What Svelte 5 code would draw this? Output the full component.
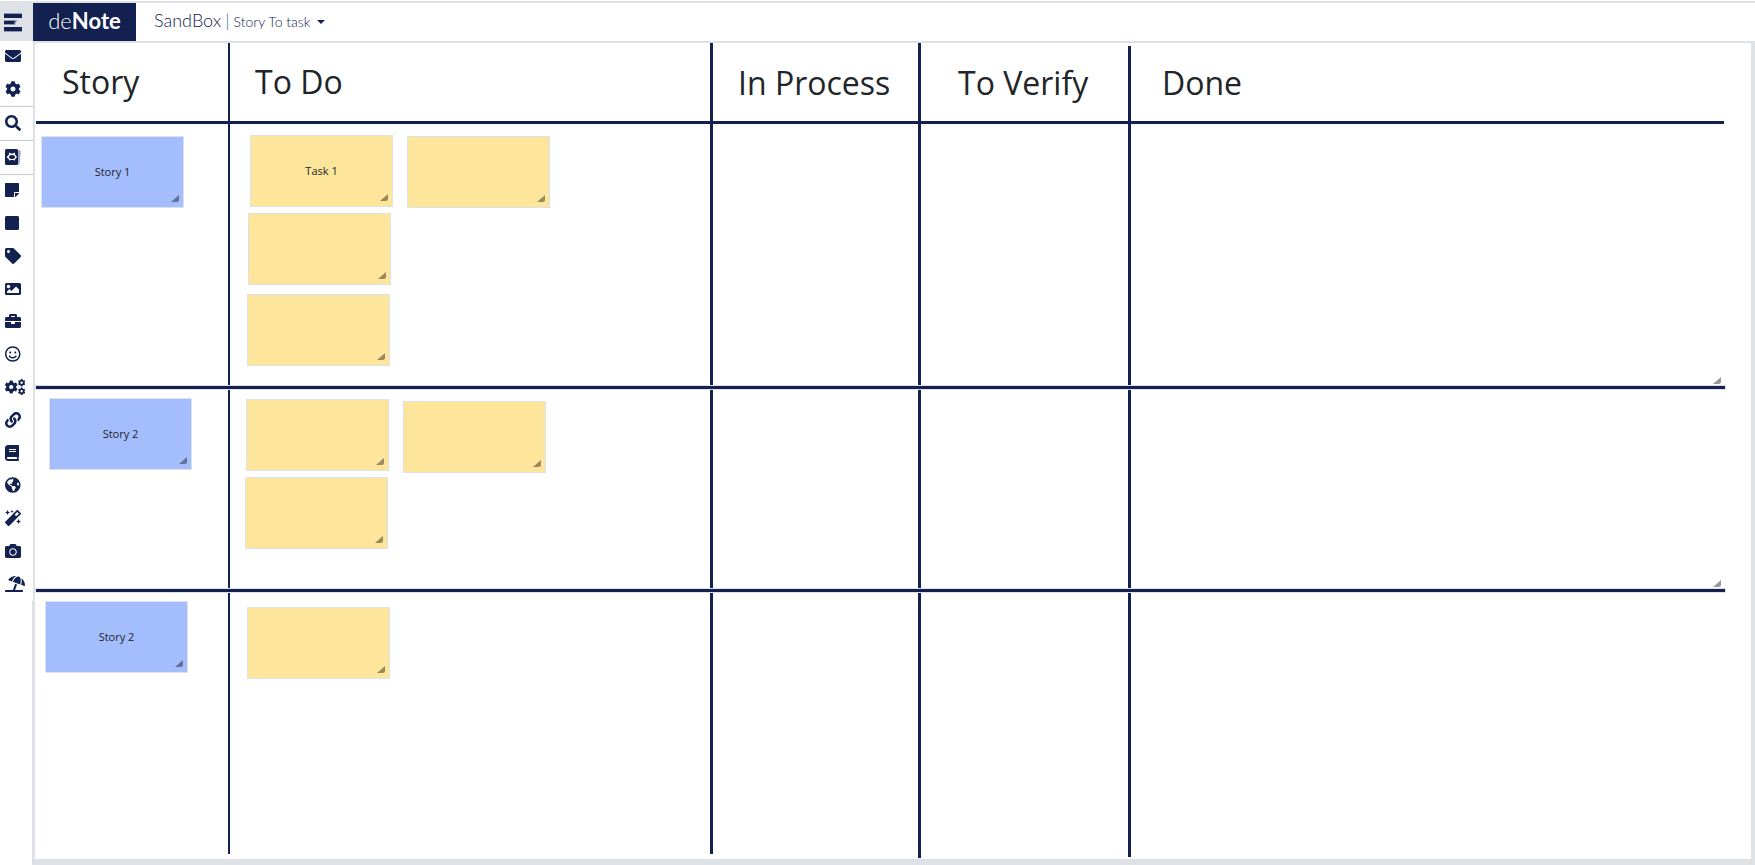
<script>
  const cog =
    "M487.4 315.7l-42.6-24.6c4.3-23.2 4.3-47 0-70.2l42.6-24.6c4.9-2.8 7.1-8.6 5.5-14-11.1-35.6-30-67.8-54.7-94.6-3.8-4.1-10-5.1-14.8-2.3L380.8 110c-17.9-15.4-38.5-27.3-60.8-35.1V25.8c0-5.6-3.9-10.5-9.4-11.7-36.7-8.2-74.3-7.8-109.2 0-5.5 1.2-9.4 6.1-9.4 11.7V75c-22.2 7.9-42.8 19.8-60.8 35.1L88.7 85.5c-4.9-2.8-11-1.9-14.8 2.3-24.7 26.7-43.6 58.9-54.7 94.6-1.7 5.4.6 11.2 5.5 14L67.3 221c-4.3 23.2-4.3 47 0 70.2l-42.6 24.6c-4.9 2.8-7.1 8.6-5.5 14 11.1 35.6 30 67.8 54.7 94.6 3.8 4.1 10 5.1 14.8 2.3l42.6-24.6c17.9 15.4 38.5 27.3 60.8 35.1v49.2c0 5.6 3.9 10.5 9.4 11.7 36.7 8.2 74.3 7.8 109.2 0 5.5-1.2 9.4-6.1 9.4-11.7v-49.2c22.2-7.9 42.8-19.8 60.8-35.1l42.6 24.6c4.9 2.8 11 1.9 14.8-2.3 24.7-26.7 43.6-58.9 54.7-94.6 1.5-5.5-.7-11.3-5.6-14.1zM256 336c-44.1 0-80-35.9-80-80s35.9-80 80-80 80 35.9 80 80-35.9 80-80 80z";

  const settings = [
    { name: "Messages", w: 512, d: "M502.3 190.8c3.9-3.1 9.7-.2 9.7 4.7V400c0 26.5-21.5 48-48 48H48c-26.5 0-48-21.5-48-48V195.6c0-5 5.7-7.8 9.7-4.7 22.4 17.4 52.1 39.5 154.1 113.6 21.1 15.4 56.7 47.8 92.2 47.6 35.7.3 72-32.8 92.3-47.6 102-74.1 131.6-96.3 154-113.7zM256 320c23.2.4 56.6-29.2 73.4-41.4 132.7-96.3 142.8-104.7 173.4-128.7 5.8-4.5 9.2-11.5 9.2-18.9v-19c0-26.5-21.5-48-48-48H48c-26.5 0-48 21.5-48 48v19c0 7.4 3.4 14.3 9.2 18.9 30.6 23.9 40.7 32.4 173.4 128.7 16.8 12.2 50.2 41.8 73.4 41.4z" },
    { name: "Settings", w: 512, d: cog },
  ];

  const search = [
    { name: "Search", w: 512, d: "M505 442.7L405.3 343c-4.5-4.5-10.6-7-17-7H372c27.6-35.3 44-79.7 44-128C416 93.1 322.9 0 208 0S0 93.1 0 208s93.1 208 208 208c48.3 0 92.7-16.4 128-44v16.3c0 6.4 2.5 12.5 7 17l99.7 99.7c9.4 9.4 24.6 9.4 33.9 0l28.3-28.3c9.4-9.4 9.4-24.6.1-34zM208 336c-70.7 0-128-57.2-128-128 0-70.7 57.2-128 128-128 70.7 0 128 57.2 128 128 0 70.7-57.2 128-128 128z" },
  ];

  const cards = [{ name: "Cards", kind: "cards" }];

  const tools = [
    { name: "Note", w: 448, d: "M312 320h136V56c0-13.3-10.7-24-24-24H24C10.7 32 0 42.7 0 56v400c0 13.3 10.7 24 24 24h264V344c0-13.2 10.8-24 24-24zm129 55l-98 98c-4.5 4.5-10.6 7-17 7h-6V352h128v6.1c0 6.3-2.5 12.4-7 16.9z" },
    { name: "Shape", w: 448, d: "M400 32H48C21.5 32 0 53.5 0 80v352c0 26.5 21.5 48 48 48h352c26.5 0 48-21.5 48-48V80c0-26.5-21.5-48-48-48z" },
    { name: "Tag", w: 512, d: "M0 252.118V48C0 21.49 21.49 0 48 0h204.118a48 48 0 0 1 33.941 14.059l211.882 211.882c18.745 18.745 18.745 49.137 0 67.882L293.823 497.941c-18.745 18.745-49.137 18.745-67.882 0L14.059 286.059A48 48 0 0 1 0 252.118zM112 64c-26.51 0-48 21.49-48 48s21.49 48 48 48 48-21.49 48-48-21.49-48-48-48z" },
    { name: "Image", w: 512, d: "M464 448H48c-26.51 0-48-21.49-48-48V112c0-26.51 21.49-48 48-48h416c26.51 0 48 21.49 48 48v288c0 26.51-21.49 48-48 48zM112 120c-30.928 0-56 25.072-56 56s25.072 56 56 56 56-25.072 56-56-25.072-56-56-56zM64 384h384V272l-87.515-87.515c-4.686-4.686-12.284-4.686-16.971 0L208 320l-55.515-55.515c-4.686-4.686-12.284-4.686-16.971 0L64 336v48z" },
    { name: "Briefcase", w: 512, d: "M320 336c0 8.84-7.16 16-16 16h-96c-8.84 0-16-7.16-16-16v-48H0v144c0 25.6 22.4 48 48 48h416c25.6 0 48-22.4 48-48V288H320v48zm144-208h-80V80c0-25.6-22.4-48-48-48H176c-25.6 0-48 22.4-48 48v48H48c-25.6 0-48 22.4-48 48v80h512v-80c0-25.6-22.4-48-48-48zm-144 0H192V96h128v32z" },
    { name: "Emoji", w: 496, d: "M248 8C111 8 0 119 0 256s111 248 248 248 248-111 248-248S385 8 248 8zm0 448c-110.3 0-200-89.7-200-200S137.7 56 248 56s200 89.7 200 200-89.7 200-200 200zm-80-216c17.7 0 32-14.3 32-32s-14.3-32-32-32-32 14.3-32 32 14.3 32 32 32zm160 0c17.7 0 32-14.3 32-32s-14.3-32-32-32-32 14.3-32 32 14.3 32 32 32zm4 72.6c-20.8 25-51.5 39.4-84 39.4s-63.2-14.3-84-39.4c-8.5-10.2-23.7-11.5-33.8-3.1-10.2 8.5-11.5 23.6-3.1 33.8 30 36 74.1 56.6 120.9 56.6s90.9-20.6 120.9-56.6c8.5-10.2 7.1-25.3-3.1-33.8-10.1-8.4-25.3-7.1-33.8 3.1z" },
    { name: "Automation", kind: "cogs" },
    { name: "Link", w: 512, d: "M326.612 185.391c59.747 59.809 58.927 155.698.36 214.59-.11.12-.24.25-.36.37l-67.2 67.2c-59.27 59.27-155.699 59.262-214.96 0-59.27-59.26-59.27-155.7 0-214.96l37.106-37.106c9.84-9.84 26.786-3.3 27.294 10.606.648 17.722 3.826 35.527 9.69 52.721 1.986 5.822.567 12.262-3.783 16.612l-13.087 13.087c-28.026 28.026-28.905 73.66-1.155 101.96 28.024 28.579 74.086 28.749 102.325.51l67.2-67.19c28.191-28.191 28.073-73.757 0-101.83-3.701-3.694-7.429-6.564-10.341-8.569a16.037 16.037 0 0 1-6.947-12.606c-.396-10.567 3.348-21.456 11.698-29.806l21.054-21.055c5.521-5.521 14.182-6.199 20.584-1.731a152.482 152.482 0 0 1 20.522 17.197zM467.547 44.449c-59.261-59.262-155.69-59.27-214.96 0l-67.2 67.2c-.12.12-.25.25-.36.37-58.566 58.892-59.387 154.781.36 214.59a152.454 152.454 0 0 0 20.521 17.196c6.402 4.468 15.064 3.789 20.584-1.731l21.054-21.055c8.35-8.35 12.094-19.239 11.698-29.806a16.037 16.037 0 0 0-6.947-12.606c-2.912-2.005-6.64-4.875-10.341-8.569-28.073-28.073-28.191-73.639 0-101.83l67.2-67.19c28.239-28.239 74.3-28.069 102.325.51 27.75 28.3 26.872 73.934-1.155 101.96l-13.087 13.087c-4.35 4.35-5.769 10.79-3.783 16.612 5.864 17.194 9.042 34.999 9.69 52.721.509 13.906 17.454 20.446 27.294 10.606l37.106-37.106c59.271-59.259 59.271-155.699.001-214.959z" },
    { name: "Book", w: 448, d: "M448 360V24c0-13.3-10.7-24-24-24H96C43 0 0 43 0 96v320c0 53 43 96 96 96h328c13.3 0 24-10.7 24-24v-16c0-7.5-3.5-14.3-8.9-18.7-4.2-15.4-4.2-59.3 0-74.7 5.4-4.3 8.9-11.1 8.9-18.6zM128 134c0-3.3 2.7-6 6-6h212c3.3 0 6 2.7 6 6v20c0 3.3-2.7 6-6 6H134c-3.3 0-6-2.7-6-6v-20zm0 64c0-3.3 2.7-6 6-6h212c3.3 0 6 2.7 6 6v20c0 3.3-2.7 6-6 6H134c-3.3 0-6-2.7-6-6v-20zm253.4 250H96c-17.7 0-32-14.3-32-32 0-17.6 14.4-32 32-32h285.4c-1.9 17.1-1.9 46.9 0 64z" },
    { name: "Web", w: 496, d: "M248 8C111.03 8 0 119.03 0 256s111.03 248 248 248 248-111.03 248-248S384.97 8 248 8zm82.29 357.6c-3.9 3.88-7.99 7.95-11.31 11.28-2.99 3-5.1 6.7-6.17 10.71-1.51 5.66-2.73 11.38-4.77 16.87l-17.39 46.85c-13.76 3-28 4.69-42.65 4.69v-27.38c1.69-12.62-7.64-36.26-22.63-51.25-6-6-9.37-14.14-9.37-22.63v-32.01c0-11.64-6.27-22.34-16.46-27.97-14.37-7.95-34.81-19.06-48.81-26.11-11.48-5.78-22.1-13.14-31.65-21.75l-.8-.72a114.792 114.792 0 0 1-18.06-20.74c-9.38-13.77-24.66-36.42-34.59-51.14 20.47-45.5 57.36-82.04 103.2-101.89l24.01 12.01C203.48 89.74 216 82.01 216 70.11v-11.3c7.99-1.29 16.12-2.11 24.39-2.42l28.3 28.3c6.25 6.25 6.25 16.38 0 22.63L264 112l-10.34 10.34c-3.12 3.12-3.12 8.19 0 11.31l4.69 4.69c3.12 3.12 3.12 8.19 0 11.31l-8 8a8.008 8.008 0 0 1-5.66 2.34h-8.99c-2.08 0-4.08.81-5.58 2.27l-9.92 9.65a8.008 8.008 0 0 0-1.58 9.31l15.59 31.19c2.66 5.32-1.21 11.58-7.15 11.58h-5.64c-1.93 0-3.79-.7-5.24-1.96l-9.28-8.06a16.017 16.017 0 0 0-15.55-3.1l-31.17 10.39a11.95 11.95 0 0 0-8.17 11.34c0 4.53 2.56 8.66 6.61 10.69l11.08 5.54c9.41 4.71 19.79 7.16 30.31 7.16s22.59 27.29 32 32h66.75c8.49 0 16.62 3.37 22.63 9.37l13.69 13.69a30.503 30.503 0 0 1 8.93 21.57 46.536 46.536 0 0 1-13.72 32.98zM417 274.25c-5.79-1.45-10.84-5-14.15-9.97l-17.98-26.97a23.97 23.97 0 0 1 0-26.62l19.59-29.38c2.32-3.47 5.5-6.29 9.24-8.15l12.98-6.49C440.2 193.59 448 223.87 448 256c0 8.67-.74 17.16-1.82 25.54L417 274.25z" },
    { name: "Magic", w: 512, d: "M224 96l16-32 32-16-32-16-16-32-16 32-32 16 32 16 16 32zM80 160l26.66-53.33L160 80l-53.34-26.67L80 0 53.34 53.33 0 80l53.34 26.67L80 160zm352 128l-26.66 53.33L352 368l53.34 26.67L432 448l26.66-53.33L512 368l-53.34-26.67L432 288zm70.62-193.77L417.77 9.38C411.53 3.12 403.34 0 395.15 0c-8.19 0-16.38 3.12-22.63 9.38L9.38 372.52c-12.5 12.5-12.5 32.76 0 45.25l84.85 84.85c6.25 6.25 14.44 9.37 22.62 9.37 8.19 0 16.38-3.12 22.63-9.37l363.14-363.15c12.5-12.48 12.5-32.75 0-45.24zM359.45 203.46l-50.91-50.91 86.6-86.6 50.91 50.91-86.6 86.6z" },
    { name: "Camera", w: 512, d: "M512 144v288c0 26.5-21.5 48-48 48H48c-26.5 0-48-21.5-48-48V144c0-26.5 21.5-48 48-48h88l12.3-32.9c7-18.7 24.9-31.1 44.9-31.1h125.5c20 0 37.9 12.4 44.9 31.1L376 96h88c26.5 0 48 21.5 48 48zM376 288c0-66.2-53.8-120-120-120s-120 53.8-120 120 53.8 120 120 120 120-53.8 120-120zm-32 0c0 48.5-39.5 88-88 88s-88-39.5-88-88 39.5-88 88-88 88 39.5 88 88z" },
    { name: "Holiday", w: 640, d: "M115.38 136.9l102.11 37.18c35.19-81.54 86.21-144.29 139-173.7-95.88-4.89-188.78 36.96-248.53 111.8-6.69 8.4-2.66 21.05 7.42 24.72zm132.25 48.16l238.48 86.83c35.76-121.38 18.7-231.66-42.63-253.98-7.4-2.7-15.13-4-23.09-4-58.02.01-128.27 69.17-172.76 171.15zM521.48 60.5c6.22 16.3 10.83 34.6 13.2 55.19 5.74 49.89-1.42 108.23-18.95 166.98l102.62 37.36c10.09 3.67 21.31-3.43 21.57-14.17 2.32-95.69-41.91-187.44-118.44-245.36zM560 447.98H321.06L386 269.5l-60.14-21.9-72.9 200.37H16c-8.84 0-16 7.16-16 16.01v32.01C0 504.83 7.16 512 16 512h544c8.84 0 16-7.17 16-16.01v-32.01c0-8.84-7.16-16-16-16z" },
  ];

  const groups = [settings, search, cards, tools];

  // Everything on the board is a free item: x / y from the board's corner
  const titles = [
    { text: "Story", x: 27, y: 15 },
    { text: "To Do", x: 220, y: 15 },
    { text: "In Process", x: 703, y: 16 },
    { text: "To Verify", x: 923, y: 16 },
    { text: "Done", x: 1127, y: 16 },
  ];

  const columns = [
    { x: 193, top: 0, bottom: 5, size: 2 },
    { x: 675, top: 0, bottom: 5, size: 3 },
    { x: 883, top: 0, bottom: 1, size: 3 },
    { x: 1093, top: 3, bottom: 2, size: 3 },
  ];

  const rows = [
    { y: 77, frame: false },
    { y: 342, frame: true },
    { y: 545, frame: true },
  ];

  let notes = [
    { type: "story", text: "Story 1", x: 6, y: 93 },
    { type: "task", text: "Task 1", x: 215, y: 92 },
    { type: "task", text: "", x: 372, y: 93 },
    { type: "task", text: "", x: 213, y: 170 },
    { type: "task", text: "", x: 212, y: 251 },
    { type: "story", text: "Story 2", x: 14, y: 355 },
    { type: "task", text: "", x: 211, y: 356 },
    { type: "task", text: "", x: 368, y: 358 },
    { type: "task", text: "", x: 210, y: 434 },
    { type: "story", text: "Story 2", x: 10, y: 558 },
    { type: "task", text: "", x: 212, y: 564 },
  ];
</script>

{#snippet grip()}
  <svg class="grip" viewBox="0 0 8 7" aria-hidden="true">
    <path d="M8 0v4.500q0 2.500-2.500 2.500H0z" />
  </svg>
{/snippet}

<div class="app">
  <header>
    <button class="menu" aria-label="Menu">
      <svg width="18" height="19" viewBox="0 0 18 19" aria-hidden="true">
        <path class="shade" d="M0 0h18v5H0zM0 7h13l-2 5H0zM0 14h18v5H0z" />
        <path d="M0 1h18v4H0zM0 8h11l-1 3H0zM0 14h18v4H0z" />
      </svg>
    </button>
    <a class="logo" href="#home">de<b>Note</b></a>
    <button class="crumb">
      <span class="space">SandBox</span>
      <span class="bar">|</span>
      <span>Story To task</span>
      <span class="caret"></span>
    </button>
  </header>

  <main>
    <nav>
      {#each groups as group}
        <div class="group">
          {#each group as item}
            <button class="tool" aria-label={item.name}>
              {#if item.kind === "cards"}
                <svg width="16" height="16" viewBox="0 0 16 16">
                  <path class="back" d="M12 1l3 .500q1 .300.900 1.300L14.500 14.500q-.300 1.200-1.500 1.200H10z" />
                  <rect width="13" height="16" rx="1.500" />
                  <path class="face" d="M1.500 8L4 5.500V3.500l2 1h2l2-1v2L12 8l-2 2.500v1l-2-.500H6l-2 .500v-1z" />
                  <ellipse cx="7" cy="8" rx="3" ry="2" />
                </svg>
              {:else if item.kind === "cogs"}
                <svg width="20" height="16" viewBox="0 0 640 512">
                  <path d={cog} transform="translate(-16 41) scale(.84)" />
                  <path d={cog} transform="translate(410 -4) scale(.48)" />
                  <path d={cog} transform="translate(410 270) scale(.48)" />
                </svg>
              {:else}
                <svg width={item.w / 32} height="16" viewBox="0 0 {item.w} 512">
                  <path d={item.d} />
                </svg>
              {/if}
            </button>
          {/each}
        </div>
      {/each}
    </nav>

    <section class="board">
      {#each columns as col}
        <div
          class="column"
          style="left: {col.x}px; top: {col.top}px; bottom: {col.bottom}px; width: {col.size}px"
        ></div>
      {/each}

      {#each rows as row}
        <div class="row" class:frame={row.frame} style="top: {row.y}px">
          {#if row.frame}
            {@render grip()}
          {/if}
        </div>
      {/each}

      {#each titles as title}
        <h2 style="left: {title.x}px; top: {title.y}px">{title.text}</h2>
      {/each}

      {#each notes as note}
        <div class="note {note.type}" style="left: {note.x}px; top: {note.y}px">
          {note.text}
          {@render grip()}
        </div>
      {/each}
    </section>
  </main>
</div>

<style>
  :global(body) {
    margin: 0;
    background: #fff;
  }
  .app {
    display: flex;
    flex-direction: column;
    box-sizing: border-box;
    min-height: 100vh;
    padding-top: 1px;
    font-family: "Open Sans", "Noto Sans", sans-serif;
    color: #212529;
  }
  button {
    padding: 0;
    border: 0;
    background: none;
    font: inherit;
    color: inherit;
    cursor: pointer;
  }
  svg {
    display: block;
    fill: #12214f;
  }
  header {
    display: flex;
    height: 38px;
    border-top: 2px solid #dee2e6;
    font-family: Lato, sans-serif;
    color: #12214f;
  }
  .menu {
    width: 33px;
    padding-left: 4px;
    background: #dee2e6;
  }
  .shade {
    fill: #8f97b3;
  }
  .logo {
    display: flex;
    justify-content: center;
    width: 103px;
    background: #12214f;
    color: #fff;
    font-size: 22px;
    font-weight: 300;
    line-height: 36px;
    text-decoration: none;
  }
  .logo b {
    font-weight: 700;
  }
  .crumb {
    display: flex;
    align-items: baseline;
    padding-left: 18px;
    font-size: 14px;
    font-weight: 300;
    line-height: 34px;
  }
  .space,
  .bar {
    font-size: 18px;
  }
  .bar {
    margin: 0 4px;
    color: #1c6fae;
  }
  .caret {
    align-self: flex-start;
    margin: 17px 0 0 7px;
    border: 4px solid transparent;
    border-top-color: #12214f;
    border-bottom: 0;
  }
  main {
    display: flex;
    flex: 1;
  }
  nav {
    position: relative;
    z-index: 1;
    display: flex;
    flex-direction: column;
    align-self: flex-start;
    width: 33px;
    height: 560px;
    margin-right: -1px;
    background: #fff;
  }
  .group {
    display: flex;
    flex-direction: column;
    border-bottom: 1px solid #c8c9cc;
  }
  .group:last-child {
    flex: 1;
    border-bottom: 0;
  }
  .group:last-child .tool {
    flex: 1;
  }
  .tool {
    display: flex;
    align-items: center;
    height: 33px;
    padding: 0 0 2px 5px;
  }
  .group:first-child {
    height: 65px;
  }
  .back {
    fill: #a3a8bb;
  }
  .face {
    fill: #fff;
  }
  .board {
    position: relative;
    flex: 1;
    min-height: 816px;
    border: solid #dee2e6;
    border-width: 2px 4px 6px 3px;
    box-sizing: border-box;
    overflow: hidden;
  }
  .column {
    position: absolute;
    background: #12214f;
  }
  .row {
    position: absolute;
    left: 0;
    right: 26px;
    height: 3px;
    border: 1px solid transparent;
    background: #12214f;
    background-clip: padding-box;
  }
  .frame {
    right: 25px;
    border-color: #dee2e6;
  }
  h2 {
    position: absolute;
    margin: 0;
    font-size: 32px;
    font-weight: 400;
    line-height: 48px;
    white-space: nowrap;
  }
  .note {
    position: absolute;
    display: flex;
    align-items: center;
    justify-content: center;
    box-sizing: border-box;
    width: 143px;
    height: 72px;
    padding-bottom: 2px;
    border: 1px solid #dee2e6;
    font-size: 11px;
  }
  .story {
    background: #a4bdfd;
  }
  .task {
    background: #fde69b;
  }
  .grip {
    position: absolute;
    right: 4px;
    bottom: 5px;
    width: 8px;
    height: 7px;
    fill: #000;
    opacity: 0.4;
  }
</style>
